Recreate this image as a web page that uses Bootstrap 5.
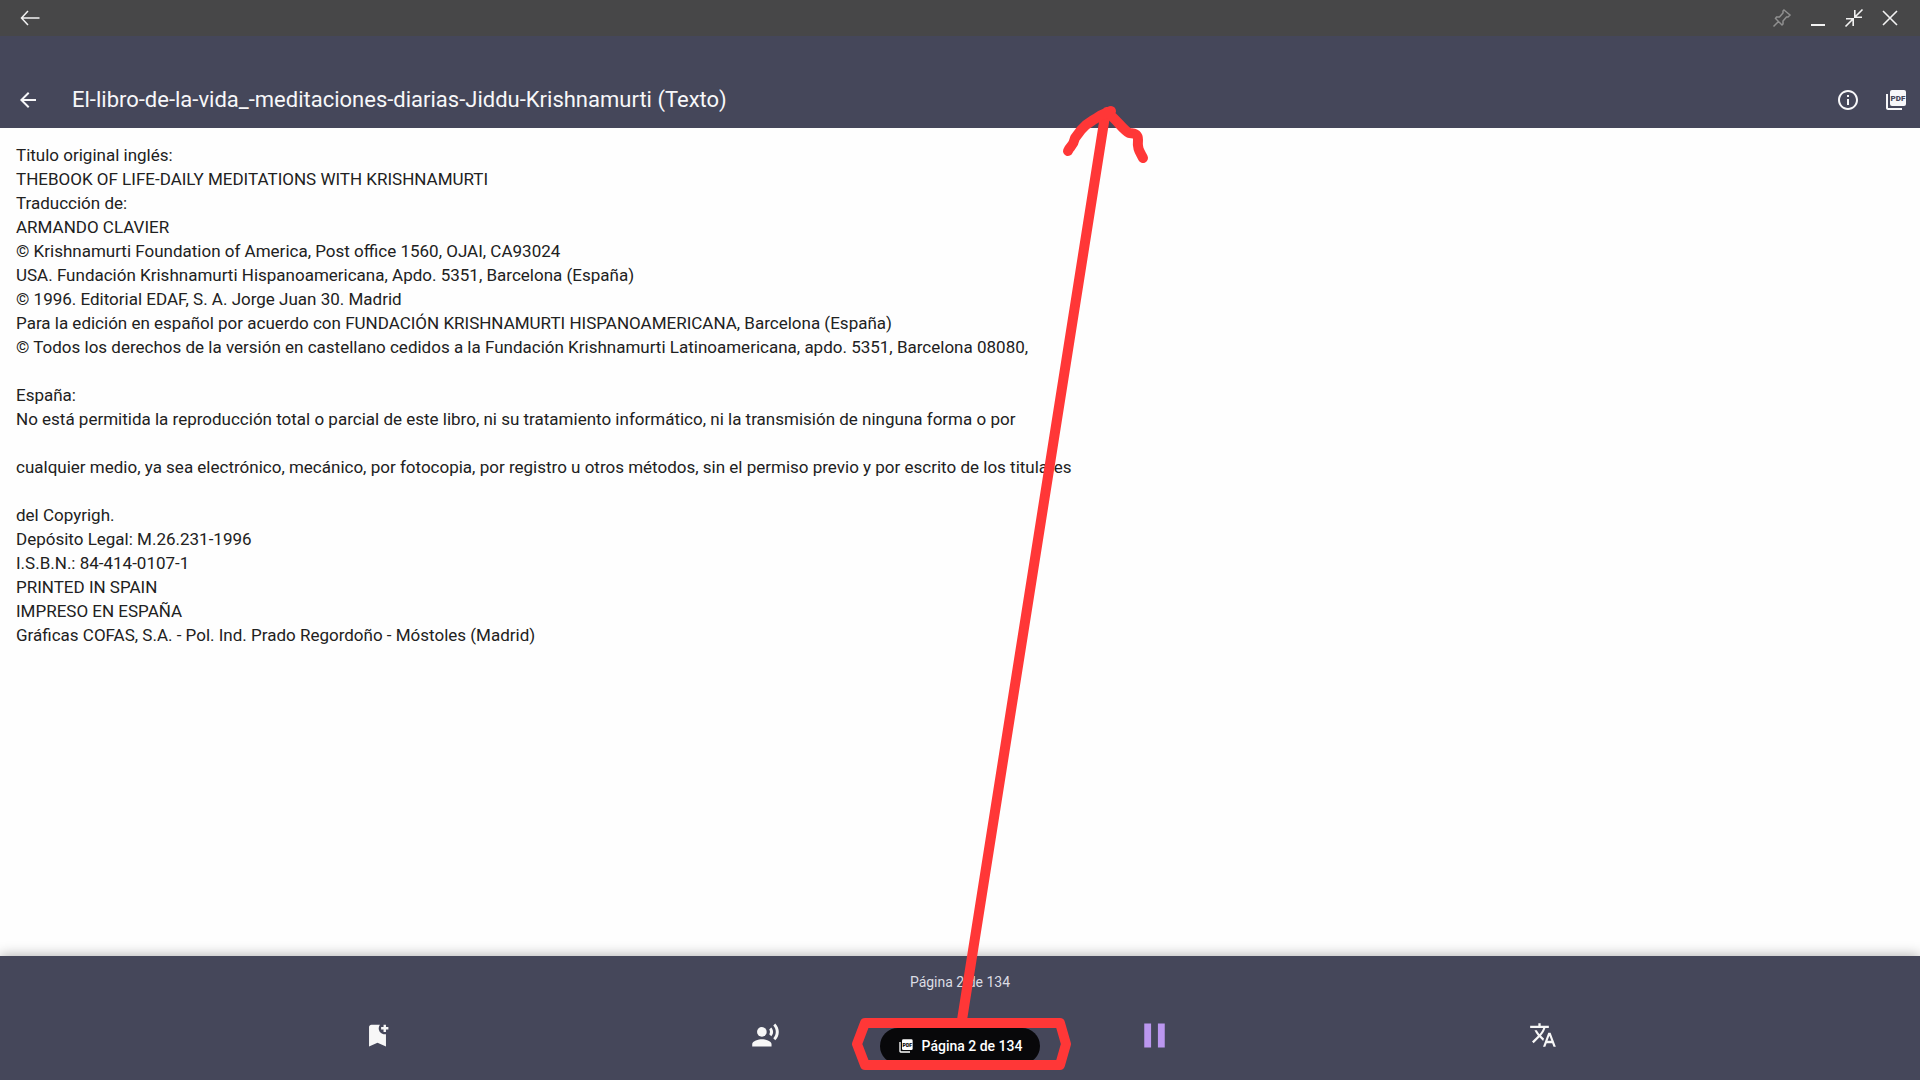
<!DOCTYPE html>
<html lang="es">
<head>
<meta charset="utf-8">
<meta name="viewport" content="width=device-width, initial-scale=1">
<title>El libro de la vida (Texto)</title>
<link href="https://cdn.jsdelivr.net/npm/bootstrap@5.3.0/dist/css/bootstrap.min.css" rel="stylesheet">
<style>
  body { font-family: Roboto, "Liberation Sans", sans-serif; color: #212121; background: #fefefe; }
  button { color: inherit; background: none; border: 0; padding: 0; display: flex; align-items: center; justify-content: center; }
  svg { display: block; }
  .window-bar { height: 36px; background: #474748; color: #f2f2f2; padding: 0 12px; }
  .window-bar button { width: 36px; height: 36px; }
  .pin-btn { opacity: .42; }
  .app-top { background: #45475a; color: #f7f7f9; padding-top: 36px; }
  .app-top button { width: 48px; height: 56px; }
  .app-top .back-btn { width: 56px; }
  .doc-title { font-size: 22px; line-height: 28px; font-weight: 400; padding-left: 16px; }
  .book-text { font-size: 17px; line-height: 24px; padding: 15px 16px; }
  .book-text p { margin: 0; min-height: 24px; }
  .app-bottom { height: 124px; background: #45475a; color: #f7f7f7; box-shadow: 0 -1px 12px rgba(0,0,0,.3); padding-top: 16px; }
  .page-label { font-size: 14px; line-height: 20px; color: #dcdde4; }
  .tool-row { padding: 19px 183px 0; }
  .tool-row button { width: 48px; height: 48px; }
  .pause-btn { color: #bb97ef; }
  .page-pill { left: 50%; bottom: 16px; transform: translateX(-50%); height: 36px; width: 160px; border-radius: 18px; background: #08080a; color: #fff; font-size: 14px; font-weight: 500; line-height: 20px; gap: 8px; }
  .markup { inset: 0; width: 100%; height: 100%; pointer-events: none; z-index: 5; }
  .pdf-letters { font: 900 8px Roboto, sans-serif; }
</style>
<script src="https://cdn.jsdelivr.net/npm/bootstrap@5.3.0/dist/js/bootstrap.bundle.min.js"></script>
</head>
<body>
<svg width="0" height="0" class="position-absolute" aria-hidden="true">
  <symbol id="pdf" viewBox="0 0 24 24">
    <rect x="6" y="2" width="16" height="16" rx="2" fill="currentColor"/>
    <path d="M4 6H2v14c0 1.1.9 2 2 2h14v-2H4z" fill="currentColor"/>
  </symbol>
</svg>
<div class="position-relative d-flex flex-column min-vh-100">
  <header>
    <div class="window-bar d-flex align-items-center">
      <button class="me-auto" aria-label="Atrás"><svg width="20" height="20" viewBox="0 0 20 20" fill="none" stroke="currentColor" stroke-width="1.5"><path d="M19.500 10H2M8 3L1.500 10L8 17"/></svg></button>
      <button class="pin-btn" aria-label="Fijar"><svg width="20" height="20" viewBox="0 0 20 20" fill="none" stroke="currentColor" stroke-width="1.500"><path d="M1.500 18.500L7 13M12 2l6 5-2 2-1.500 0-3.500 4v3l-1 1L3.500 10.500l1-1.500h3l3.500-4V3z"/></svg></button>
      <button aria-label="Minimizar"><svg width="20" height="20" viewBox="0 0 20 20" stroke="currentColor" stroke-width="2"><path d="M3 17h14"/></svg></button>
      <button aria-label="Restaurar"><svg width="20" height="20" viewBox="0 0 20 20" fill="none" stroke="currentColor" stroke-width="1.600"><path d="M18.500 1.500L11 9M10.800 2v7.200H18M1.500 18.500L9 11M2 10.800h7.200V18"/></svg></button>
      <button aria-label="Cerrar"><svg width="20" height="20" viewBox="0 0 20 20" stroke="currentColor" stroke-width="1.600"><path d="M3 3l14 14M17 3L3 17"/></svg></button>
    </div>
    <div class="app-top">
      <div class="d-flex align-items-center">
        <button class="back-btn" aria-label="Volver"><svg width="24" height="24" viewBox="0 0 24 24" fill="currentColor"><path d="M20 11H7.830l5.590-5.590L12 4l-8 8 8 8 1.410-1.410L7.830 13H20z"/></svg></button>
        <h1 class="doc-title m-0 me-auto">El-libro-de-la-vida_-meditaciones-diarias-Jiddu-Krishnamurti (Texto)</h1>
        <button aria-label="Información"><svg width="24" height="24" viewBox="0 0 24 24" fill="currentColor"><path d="M11 7h2v2h-2zm0 4h2v6h-2zm1-9C6.480 2 2 6.480 2 12s4.480 10 10 10 10-4.480 10-10S17.520 2 12 2zm0 18c-4.410 0-8-3.590-8-8s3.590-8 8-8 8 3.590 8 8-3.590 8-8 8z"/></svg></button>
        <button aria-label="Ver PDF"><svg width="24" height="24" viewBox="0 0 24 24"><use href="#pdf"/><text class="pdf-letters" x="14" y="13" text-anchor="middle" fill="#45475a">PDF</text></svg></button>
      </div>
    </div>
  </header>
  <main class="book-text flex-grow-1">
    <p>Titulo original inglés:</p>
    <p>THEBOOK OF LIFE-DAILY MEDITATIONS WITH KRISHNAMURTI</p>
    <p>Traducción de:</p>
    <p>ARMANDO CLAVIER</p>
    <p>© Krishnamurti Foundation of America, Post office 1560, OJAI, CA93024</p>
    <p>USA. Fundación Krishnamurti Hispanoamericana, Apdo. 5351, Barcelona (España)</p>
    <p>© 1996. Editorial EDAF, S. A. Jorge Juan 30. Madrid</p>
    <p>Para la edición en español por acuerdo con FUNDACIÓN KRISHNAMURTI HISPANOAMERICANA, Barcelona (España)</p>
    <p>© Todos los derechos de la versión en castellano cedidos a la Fundación Krishnamurti Latinoamericana, apdo. 5351, Barcelona 08080,</p>
    <p></p>
    <p>España:</p>
    <p>No está permitida la reproducción total o parcial de este libro, ni su tratamiento informático, ni la transmisión de ninguna forma o por</p>
    <p></p>
    <p>cualquier medio, ya sea electrónico, mecánico, por fotocopia, por registro u otros métodos, sin el permiso previo y por escrito de los titulares</p>
    <p></p>
    <p>del Copyrigh.</p>
    <p>Depósito Legal: M.26.231-1996</p>
    <p>I.S.B.N.: 84-414-0107-1</p>
    <p>PRINTED IN SPAIN</p>
    <p>IMPRESO EN ESPAÑA</p>
    <p>Gráficas COFAS, S.A. - Pol. Ind. Prado Regordoño - Móstoles (Madrid)</p>
  </main>
  <footer class="app-bottom position-relative">
    <div class="page-label text-center">Página 2 de 134</div>
    <div class="tool-row row g-0 row-cols-4">
      <div class="d-flex justify-content-center"><button aria-label="Añadir marcador"><svg width="29" height="29" viewBox="0 0 24 24" fill="currentColor"><path d="M21 7h-2v2h-2V7h-2V5h2V3h2v2h2zM19 21l-7-3-7 3V5c0-1.100.9-2 2-2h7c-.63.84-1 1.870-1 3 0 2.760 2.240 5 5 5 .34 0 .68-.03 1-.1z"/></svg></button></div>
      <div class="d-flex justify-content-center"><button aria-label="Leer en voz alta"><svg width="29" height="29" viewBox="0 0 24 24" fill="currentColor"><circle cx="9" cy="9" r="4"/><path d="M9 15c-2.670 0-8 1.340-8 4v2h16v-2c0-2.660-5.330-4-8-4zm7.760-9.640l-1.680 1.690c.84 1.180.84 2.710 0 3.890l1.680 1.690c2.020-2.020 2.020-5.070 0-7.270zM20.070 2l-1.630 1.630c2.770 3.020 2.770 7.560 0 10.740L20.070 16c3.900-3.890 3.910-9.950 0-14z"/></svg></button></div>
      <div class="d-flex justify-content-center"><button class="pause-btn" aria-label="Pausar"><svg width="41" height="41" viewBox="0 0 24 24" fill="currentColor"><path d="M6 19h4V5H6zm8-14v14h4V5z"/></svg></button></div>
      <div class="d-flex justify-content-center"><button aria-label="Traducir"><svg width="28" height="28" viewBox="0 0 24 24" fill="currentColor"><path d="M12.870 15.070l-2.540-2.510.03-.03c1.740-1.940 2.980-4.170 3.710-6.530H17V4h-7V2H8v2H1v1.990h11.170C11.500 7.920 10.440 9.750 9 11.350 8.070 10.320 7.300 9.190 6.690 8h-2c.73 1.630 1.730 3.170 2.980 4.560l-5.090 5.020L4 19l5-5 3.110 3.110zM18.500 10h-2L12 22h2l1.120-3h4.750L21 22h2zm-2.620 7l1.620-4.330L19.120 17z"/></svg></button></div>
    </div>
    <button class="page-pill position-absolute"><svg width="16" height="16" viewBox="0 0 24 24"><use href="#pdf"/><text class="pdf-letters" x="14" y="13" text-anchor="middle" fill="#08080a">PDF</text></svg><span>Página 2 de 134</span></button>
  </footer>
  <svg class="markup position-absolute" viewBox="0 0 1920 1080" fill="none" stroke="#ff3737" stroke-width="10" stroke-linecap="round" stroke-linejoin="round" aria-hidden="true">
    <path d="M962 1020L1105 116"/>
    <path d="M1068 151C1070 146 1073 147 1075 138L1081 130C1087 123 1090 122 1095 119C1102 114 1106 113 1111 111M1107 112C1118 121 1122 129 1129 133C1135 133 1138 134 1138 140C1137 149 1140 152 1143 158"/>
    <path d="M865 1023H1060L1066 1044L1060 1065H865L857 1044Z"/>
  </svg>
</div>
</body>
</html>
